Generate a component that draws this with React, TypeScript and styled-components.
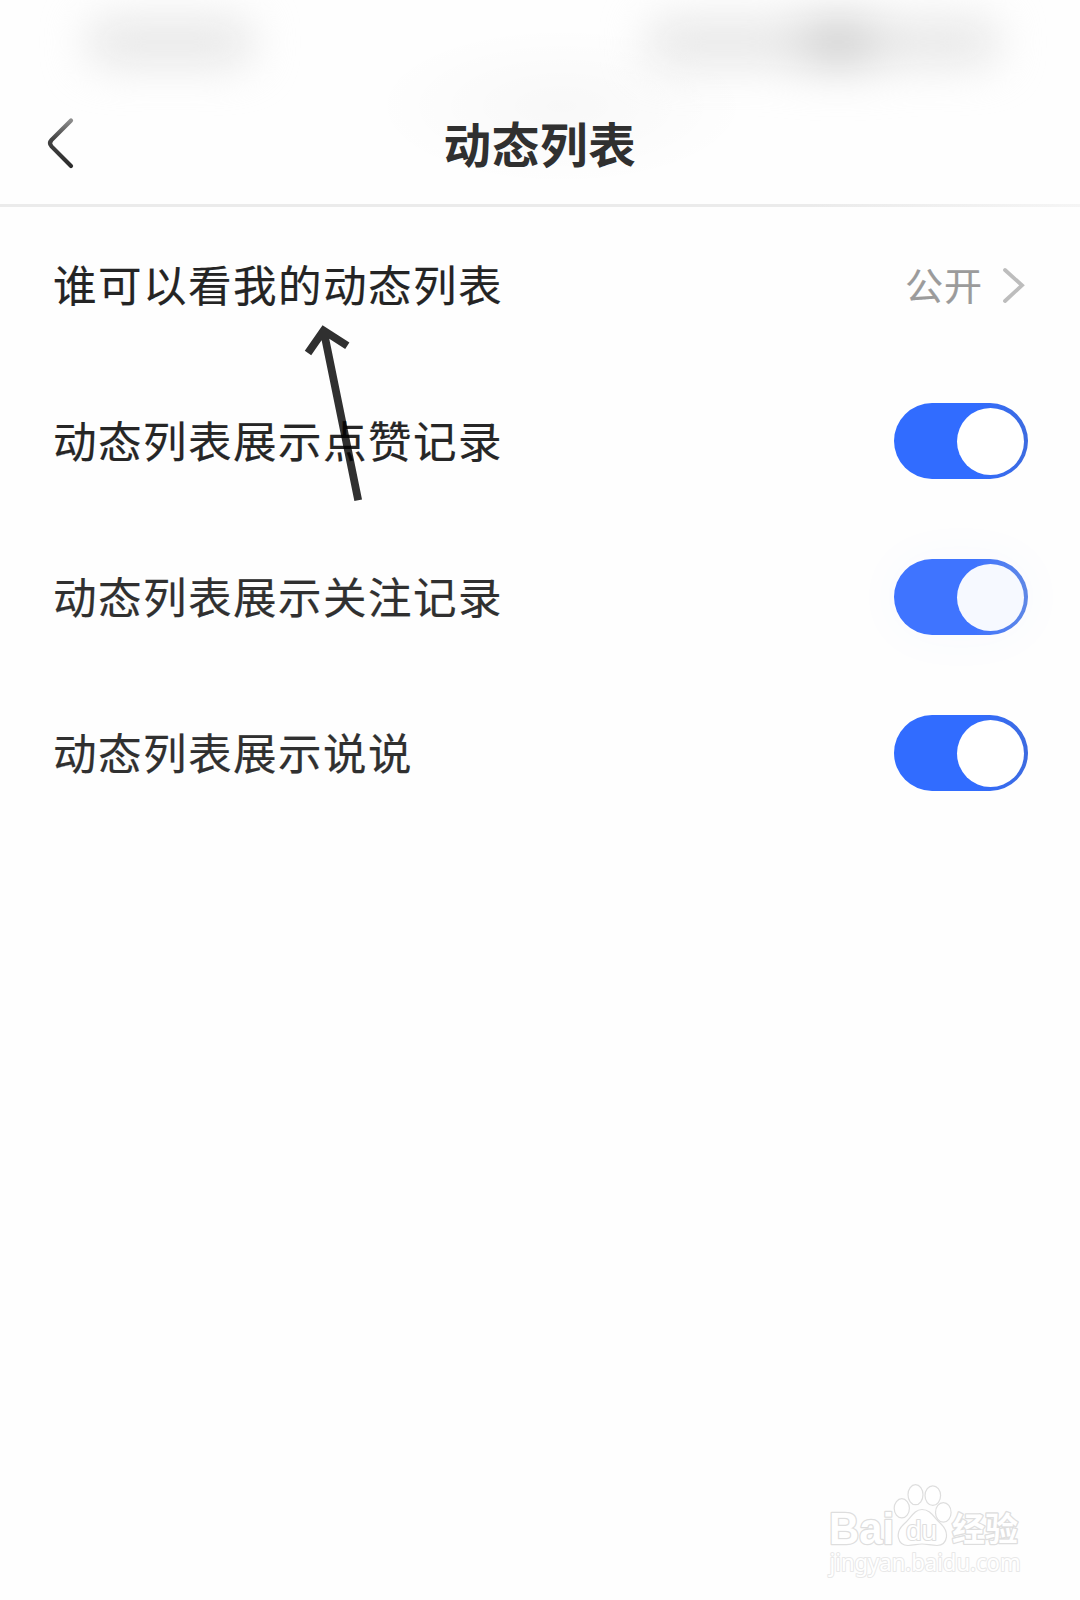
import React, { useState } from "react";
import styled, { createGlobalStyle } from "styled-components";

const GlobalStyle = createGlobalStyle`
  * { box-sizing: border-box; }
  body {
    margin: 0;
    background: #fefefe;
    font-family: "Noto Sans CJK SC", "Noto Sans", sans-serif;
  }
`;

const Page = styled.main`
  position: relative;
  display: flex;
  flex-direction: column;
  width: 1080px;
  height: 1600px;
  overflow: hidden;
  background: radial-gradient(ellipse 190px 80px at 52% 106px, rgba(0, 0, 0, 0.022), transparent) #fefefe;
`;

const StatusBar = styled.div`
  display: flex;
  justify-content: space-between;
  align-items: center;
  height: 84px;
  padding: 0 82px 0 88px;
`;

const StatusSmudge = styled.div<{ $width: number }>`
  display: flex;
  justify-content: center;
  align-items: center;
  width: ${(p) => p.$width}px;
  height: 44px;
  border-radius: 18px;
  background: #e6e6e6;
  filter: blur(22px);
`;

const SmudgeCore = styled.div`
  width: 90px;
  height: 54px;
  margin-left: 30px;
  background: radial-gradient(closest-side, #bdbdbd, #e4e4e4);
`;

const TitleBar = styled.header`
  display: grid;
  grid-template-columns: 120px 1fr 120px;
  align-items: center;
  height: 123px;
  border-bottom: 3px solid;
  border-image: linear-gradient(90deg, #ebebeb 75%, #f5f5f5) 1;
`;

const BackButton = styled.button`
  display: flex;
  width: 60px;
  height: 60px;
  margin-left: 30px;
  padding: 0;
  border: 0;
  background: none;
`;

const Title = styled.h1`
  margin: 0;
  padding-bottom: 2px;
  text-align: center;
  font-size: 47.5px;
  line-height: 60px;
  font-weight: 700;
  letter-spacing: 0.8px;
  color: #303030;
`;

const SettingList = styled.section`
  display: flex;
  flex-direction: column;
`;

const SettingRow = styled.div`
  display: flex;
  align-items: center;
  justify-content: space-between;
  height: 156px;
  padding: 0 52px 0 53px;
`;

const Label = styled.span<{ $color: string }>`
  padding-bottom: 2px;
  font-size: 43.5px;
  line-height: 64px;
  letter-spacing: 1.5px;
  color: ${(p) => p.$color};
  -webkit-text-stroke: 0.2px ${(p) => p.$color};
`;

const Value = styled.div`
  display: flex;
  align-items: center;
  gap: 15px;
  font-size: 38px;
  line-height: 56px;
  letter-spacing: 1px;
  color: #9b9b9b;
`;

const ValueText = styled.span`
  padding-bottom: 3px;
  -webkit-text-stroke: 0.2px #9b9b9b;
`;

const Track = styled.button<{ $on: boolean; $soft?: boolean }>`
  display: flex;
  align-items: center;
  justify-content: ${(p) => (p.$on ? "flex-end" : "flex-start")};
  width: 134px;
  height: 76px;
  padding: 4px;
  border: 0;
  border-radius: 38px;
  background: ${(p) =>
    !p.$on
      ? "#dcdcdc"
      : p.$soft
        ? "linear-gradient(90deg, #3f74ff 60%, #5f88e6)"
        : "linear-gradient(90deg, #316cff 60%, #3d6be0)"};
  box-shadow: ${(p) => (p.$soft ? "0 0 50px rgba(80, 130, 255, 0.04)" : "none")};
`;

const Knob = styled.span<{ $soft?: boolean }>`
  width: 67px;
  height: 67px;
  border-radius: 50%;
  background: ${(p) => (p.$soft ? "#f6f9ff" : "#fff")};
`;

const PointerArrow = styled.svg`
  position: absolute;
  left: 300px;
  top: 320px;
`;

const Watermark = styled.svg`
  position: absolute;
  left: 820px;
  top: 1476px;
`;

type Toggle = { label: string; color: string; soft?: boolean };

const toggles: Toggle[] = [
  { label: "动态列表展示点赞记录", color: "#262626" },
  { label: "动态列表展示关注记录", color: "#303030", soft: true },
  { label: "动态列表展示说说", color: "#303030" },
];

function ToggleRow({ label, color, soft }: Toggle) {
  const [on, setOn] = useState(true);
  return (
    <SettingRow>
      <Label $color={color}>{label}</Label>
      <Track $on={on} $soft={soft} role="switch" aria-checked={on} onClick={() => setOn(!on)}>
        <Knob $soft={soft} />
      </Track>
    </SettingRow>
  );
}

export default function App() {
  return (
    <>
      <GlobalStyle />
      <Page>
        <StatusBar>
          <StatusSmudge $width={164} />
          <StatusSmudge $width={350}>
            <SmudgeCore />
          </StatusSmudge>
        </StatusBar>
        <TitleBar>
          <BackButton>
            <svg width="60" height="60" viewBox="0 0 60 60" fill="none">
              <defs>
                <linearGradient id="back" x1="0" y1="0" x2="0" y2="1">
                  <stop offset="0" stopColor="#8c8c8c" />
                  <stop offset="0.4" stopColor="#444" />
                  <stop offset="1" stopColor="#2c2c2c" />
                </linearGradient>
              </defs>
              <path
                d="M41 6.5 L21.5 26 Q18.5 29.2 21.5 32.4 L41 52"
                stroke="url(#back)"
                strokeWidth="4.2"
                strokeLinecap="round"
              />
            </svg>
          </BackButton>
          <Title>动态列表</Title>
        </TitleBar>
        <SettingList>
          <SettingRow>
            <Label $color="#242424">谁可以看我的动态列表</Label>
            <Value>
              <ValueText>公开</ValueText>
              <svg width="30" height="44" viewBox="0 0 30 44" fill="none">
                <path d="M7 7 L24 22.3 L7 38" stroke="#bdbdbd" strokeWidth="3.8" strokeLinecap="round" />
              </svg>
            </Value>
          </SettingRow>
          {toggles.map((t) => (
            <ToggleRow key={t.label} {...t} />
          ))}
        </SettingList>
        <PointerArrow width="64" height="190" viewBox="300 320 64 190" fill="none">
          <path
            d="M308 353 L323.6 330.5 L347.3 345.7 M323.6 330.5 L358.2 500.2"
            stroke="#000"
            strokeOpacity="0.81"
            strokeWidth="7.8"
          />
        </PointerArrow>
        <Watermark width="215" height="112" viewBox="820 1476 215 112" fill="#fff" stroke="#dedede" strokeWidth="1.2">
          <ellipse cx="901.8" cy="1508.3" rx="7.6" ry="9.6" />
          <ellipse cx="915.5" cy="1494.7" rx="7.5" ry="10" />
          <ellipse cx="932.8" cy="1495.6" rx="7.8" ry="9.8" />
          <ellipse cx="943.3" cy="1512.4" rx="7.8" ry="9.8" />
          <path d="M922 1509.5 C914 1509.5 911 1518 904 1524 C894 1533 898 1545.5 908 1545.5 C914 1545.5 917 1544 922 1544 C927 1544 931 1545.5 937 1545.5 C948 1545 950 1532 940 1523 C934 1518 931 1509.5 922 1509.5 Z" />
          <g paintOrder="stroke" strokeWidth="2.6" strokeLinejoin="round">
            <text x="829" y="1543.5" fontFamily="Liberation Sans, sans-serif" fontWeight="700" fontSize="43.5" textLength="65" lengthAdjust="spacingAndGlyphs">
              Bai
            </text>
            <text x="906" y="1540" fontFamily="Liberation Sans, sans-serif" fontSize="28" strokeWidth="2.2" textLength="31" lengthAdjust="spacingAndGlyphs">
              du
            </text>
            <text x="952" y="1541" fontFamily="Noto Sans CJK SC, sans-serif" fontWeight="700" fontSize="33" textLength="66">
              经验
            </text>
            <text x="829.5" y="1570.5" fontFamily="Noto Sans, sans-serif" fontSize="23" strokeWidth="2" stroke="#e8e8e8" textLength="191" lengthAdjust="spacingAndGlyphs">
              jingyan.baidu.com
            </text>
          </g>
        </Watermark>
      </Page>
    </>
  );
}
